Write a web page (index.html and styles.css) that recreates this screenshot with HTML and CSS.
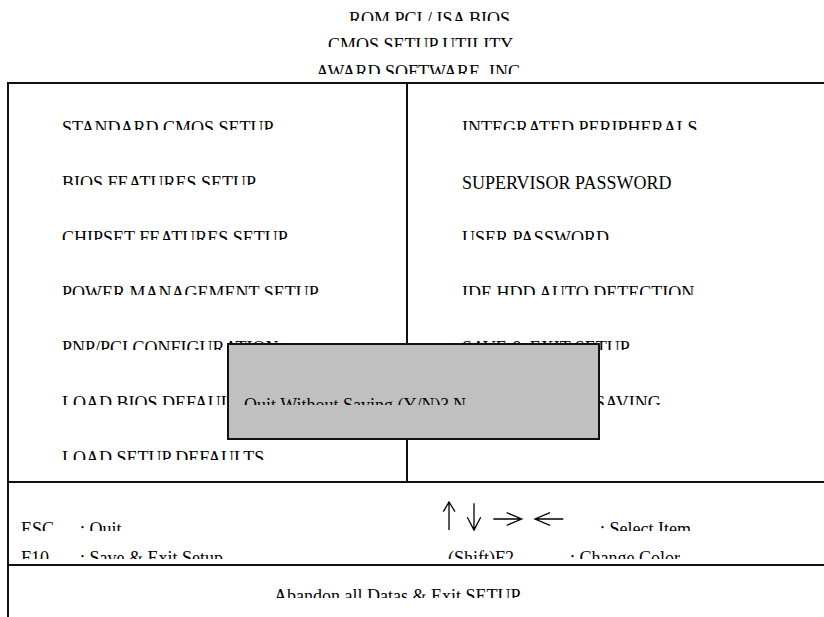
FILE: index.html
```html
<!DOCTYPE html>
<html lang="en">
<head>
  <meta charset="UTF-8" />
  <title>CMOS Setup Utility</title>
  <link rel="stylesheet" href="styles.css">
</head>
<body>
  <div class="screen">
    <header class="titles">
      <div class="title title-rom"><span class="clip">ROM PCI / ISA BIOS</span></div>
      <div class="title title-cmos"><span class="clip">CMOS SETUP UTILITY</span></div>
      <div class="title title-award"><span class="clip">AWARD SOFTWARE, INC.</span></div>
    </header>

    <div class="frame">
      <div class="menu">
        <ul class="col col-left">
          <li><span class="clip">STANDARD CMOS SETUP</span></li>
          <li><span class="clip">BIOS FEATURES SETUP</span></li>
          <li><span class="clip">CHIPSET FEATURES SETUP</span></li>
          <li><span class="clip">POWER MANAGEMENT SETUP</span></li>
          <li><span class="clip">PNP/PCI CONFIGURATION</span></li>
          <li><span class="clip">LOAD BIOS DEFAULTS</span></li>
          <li><span class="clip">LOAD SETUP DEFAULTS</span></li>
        </ul>
        <ul class="col col-right">
          <li><span class="clip">INTEGRATED PERIPHERALS</span></li>
          <li><span class="clip full">SUPERVISOR PASSWORD</span></li>
          <li><span class="clip">USER PASSWORD</span></li>
          <li><span class="clip">IDE HDD AUTO DETECTION</span></li>
          <li><span class="clip">SAVE &amp; EXIT SETUP</span></li>
          <li><span class="clip">EXIT WITHOUT SAVING</span></li>
          <li></li>
        </ul>

        <div class="dialog">
          <span class="clip">Quit Without Saving (Y/N)? N</span>
        </div>
      </div>

      <div class="keys">
        <div class="key-row">
          <span class="clip key">ESC</span>
          <span class="clip desc-quit">: Quit</span>
          <span class="arrows">
            <svg width="126" height="32" viewBox="0 0 126 32" fill="none" stroke="#000" stroke-width="1.3">
              <path d="M8 2 V30 M2.3 11.7 L8 2 L14 11.7" />
              <path d="M33 3.3 V30 M26.3 17.3 L33 30 L39.7 17.3" />
              <path d="M52.3 19 H80.7 M65.7 12.7 L80.7 19 L65.7 25.3" />
              <path d="M94 19 H122.3 M109 12.7 L94 19 L109 25.3" />
            </svg>
          </span>
          <span class="clip">: Select Item</span>
        </div>
        <div class="key-row">
          <span class="clip key">F10</span>
          <span class="clip desc-save">: Save &amp; Exit Setup</span>
          <span class="clip shift">(Shift)F2</span>
          <span class="clip">: Change Color</span>
        </div>
      </div>

      <div class="status">
        <span class="clip">Abandon all Datas &amp; Exit SETUP</span>
      </div>
    </div>
  </div>
</body>
</html>
```

FILE: styles.css
```css
* {
  box-sizing: border-box;
}

html,
body {
  margin: 0;
  padding: 0;
  overflow: hidden;
  background: #fff;
}

body {
  font-family: "Liberation Serif", "Times New Roman", serif;
  font-size: 18px;
  color: #000;
}

.screen {
  width: 100%;
  height: 617px;
}

/* every printed line is cut off a little under its cap height */
.clip {
  display: block;
  height: 11px;
  line-height: 18px;
  overflow: hidden;
  white-space: nowrap;
}

.clip.full {
  height: auto;
}

.titles {
  height: 82px;
  padding-top: 9.5px;
  display: flex;
  flex-direction: column;
  gap: 15.5px;
}

.title-rom {
  margin-left: 349px;
}

.title-cmos {
  margin-left: 328px;
}

.title-award {
  margin-left: 316px;
}

.frame {
  margin-left: 7px;
  height: 535px;
  border-top: 2px solid #111;
  border-left: 2px solid #111;
}

.menu {
  position: relative;
  height: 399px;
  display: flex;
  border-bottom: 2px solid #111;
}

.col {
  list-style: none;
  margin: 0;
  padding: 35px 0 0 53px;
  width: 397px;
  display: grid;
  grid-auto-rows: 55px;
}

.col-right {
  border-left: 2px solid #111;
  padding-left: 54px;
  flex: 1;
}

.dialog {
  position: absolute;
  left: 218px;
  top: 259px;
  width: 373px;
  height: 97px;
  background: #c0c0c0;
  border: 2px solid #111;
  padding: 51px 0 0 15px;
}

.dialog .clip {
  height: 9px;
}

.keys {
  height: 83px;
  padding: 37px 0 0 12px;
  border-bottom: 2px solid #111;
}

.key-row {
  display: flex;
  height: 29px;
}

.key {
  width: 59px;
}

.desc-quit {
  width: 361px;
}

.desc-save {
  width: 368px;
}

.shift {
  width: 122px;
}

.key-row:last-child .clip {
  height: 9.5px;
}

.arrows {
  width: 159px;
  margin-top: -20px;
}

.arrows svg {
  display: block;
}

.status {
  padding: 21px 0 0 265px;
}
```
